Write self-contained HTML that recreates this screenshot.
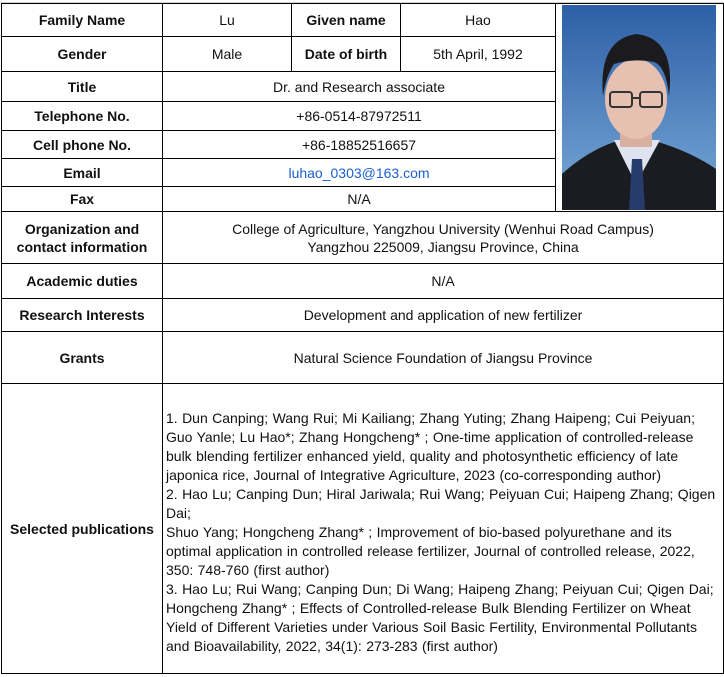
<!DOCTYPE html>
<html><head><meta charset="utf-8"><style>
body{margin:0;background:#fff;width:724px;height:677px;overflow:hidden;font-family:"Liberation Sans","Noto Sans CJK SC",sans-serif;color:#111;}
.gl{position:absolute;background:#d0d0d0}
table{position:absolute;left:1px;top:3px;width:722px;border-collapse:collapse;table-layout:fixed;}
td{border:1px solid #000;text-align:center;font-size:14px;padding:0;line-height:18px;overflow:hidden;}
td.l{font-weight:bold;}
a{color:#1a5fd0;}
.pub{text-align:left;padding-left:3px;padding-top:8px;line-height:19px;font-size:14px;letter-spacing:0px;word-spacing:0.5px;white-space:nowrap;}
</style></head><body>
<div class="gl" style="left:0;top:2px;width:724px;height:1px"></div>
<table>
<colgroup><col style="width:161px"><col style="width:129px"><col style="width:109px"><col style="width:155px"><col style="width:168px"></colgroup>
<tr style="height:33px"><td class="l">Family Name</td><td>Lu</td><td class="l">Given name</td><td>Hao</td>
<td rowspan="7" style="padding:0;vertical-align:top;">
<svg width="166" height="207" viewBox="0 0 166 207" style="display:block">
<defs><linearGradient id="bg" x1="0" y1="0" x2="0" y2="1"><stop offset="0" stop-color="#2d5fa6"/><stop offset="1" stop-color="#7aaad8"/></linearGradient></defs>
<rect x="6" y="1" width="154" height="205" fill="url(#bg)"/>
<path d="M6 206 L6 170 Q30 148 58 138 L102 138 Q135 148 160 165 L160 206Z" fill="#1a1c22"/>
<path d="M58 136 L80 180 L104 136Z" fill="#dfe3ef"/>
<path d="M76 155 L86 155 L89 206 L73 206Z" fill="#283c6c"/>
<rect x="64" y="115" width="32" height="28" fill="#d9b0a0"/>
<ellipse cx="80" cy="95" rx="31" ry="40" fill="#e6c0b0"/>
<path d="M47 92 Q42 36 80 30 Q120 34 113 92 Q110 62 98 58 Q78 54 58 60 Q50 72 47 92Z" fill="#1b1b1f"/>
<rect x="54" y="88" width="22" height="15" rx="3" fill="none" stroke="#333" stroke-width="2"/>
<rect x="84" y="88" width="22" height="15" rx="3" fill="none" stroke="#333" stroke-width="2"/>
<line x1="76" y1="94" x2="84" y2="94" stroke="#333" stroke-width="2"/>
</svg></td></tr>
<tr style="height:35px"><td class="l">Gender</td><td>Male</td><td class="l">Date of birth</td><td>5th April, 1992</td></tr>
<tr style="height:30px"><td class="l">Title</td><td colspan="3">Dr. and Research associate</td></tr>
<tr style="height:29px"><td class="l">Telephone No.</td><td colspan="3">+86-0514-87972511</td></tr>
<tr style="height:28px"><td class="l">Cell phone No.</td><td colspan="3">+86-18852516657</td></tr>
<tr style="height:28px"><td class="l">Email</td><td colspan="3"><a>luhao_0303@163.com</a></td></tr>
<tr style="height:25px"><td class="l">Fax</td><td colspan="3">N/A</td></tr>
<tr style="height:52px"><td class="l">Organization and<br>contact information</td><td colspan="4">College of Agriculture, Yangzhou University (Wenhui Road Campus)<br>Yangzhou 225009, Jiangsu Province, China</td></tr>
<tr style="height:35px"><td class="l">Academic duties</td><td colspan="4">N/A</td></tr>
<tr style="height:33px"><td class="l">Research Interests</td><td colspan="4">Development and application of new fertilizer</td></tr>
<tr style="height:52px"><td class="l">Grants</td><td colspan="4">Natural Science Foundation of Jiangsu Province</td></tr>
<tr style="height:290px"><td class="l">Selected publications</td><td colspan="4" class="pub">1. Dun Canping; Wang Rui; Mi Kailiang; Zhang Yuting; Zhang Haipeng; Cui Peiyuan;<br>Guo Yanle; Lu Hao*; Zhang Hongcheng* ; One-time application of controlled-release<br>bulk blending fertilizer enhanced yield, quality and photosynthetic efficiency of late<br>japonica rice, Journal of Integrative Agriculture, 2023 (co-corresponding author)<br>2. Hao Lu; Canping Dun; Hiral Jariwala; Rui Wang; Peiyuan Cui; Haipeng Zhang; Qigen<br>Dai;<br>Shuo Yang; Hongcheng Zhang* ; Improvement of bio-based polyurethane and its<br>optimal application in controlled release fertilizer, Journal of controlled release, 2022,<br>350: 748-760 (first author)<br>3. Hao Lu; Rui Wang; Canping Dun; Di Wang; Haipeng Zhang; Peiyuan Cui; Qigen Dai;<br>Hongcheng Zhang* ; Effects of Controlled-release Bulk Blending Fertilizer on Wheat<br>Yield of Different Varieties under Various Soil Basic Fertility, Environmental Pollutants<br>and Bioavailability, 2022, 34(1): 273-283 (first author)</td></tr>
</table>
</body></html>
